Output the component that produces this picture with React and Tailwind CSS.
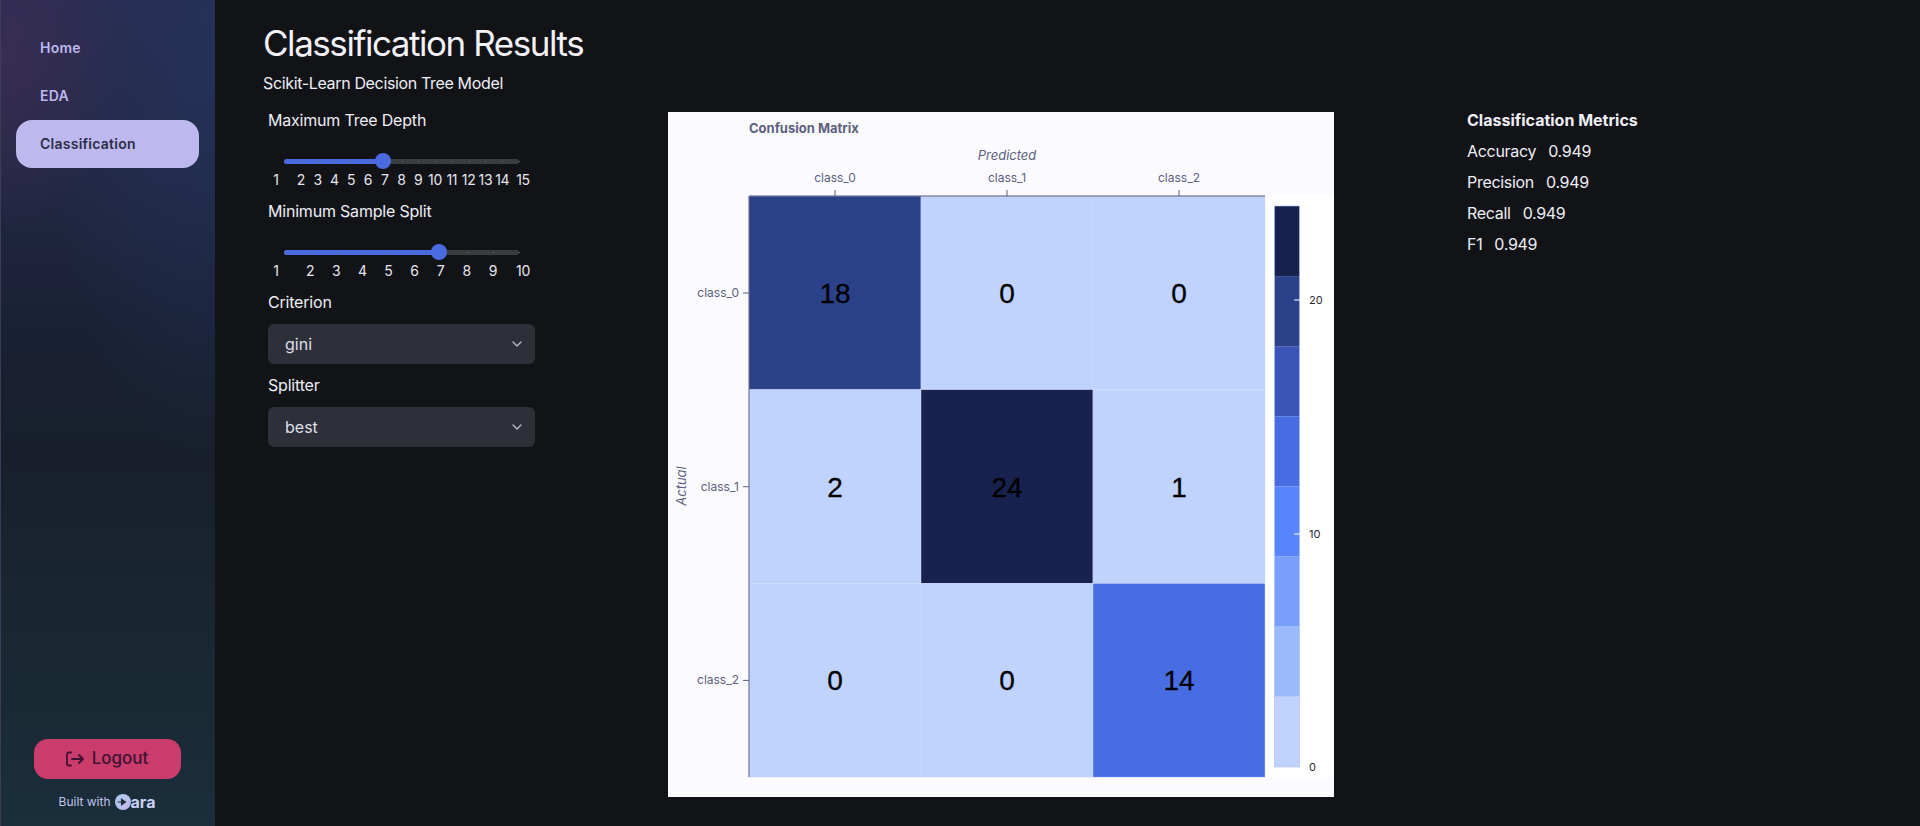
import React from "react";
import { ChevronDown } from "lucide-react";

const FONT = { fontFamily: "Inter, sans-serif" };

const NavItem = ({ label, active }) => (
  <div
    className={
      active
        ? "h-12 rounded-2xl bg-[#bdb9ee] pl-[24px] flex items-center text-sm font-semibold text-[#2b2c48] tracking-[0.25px]"
        : "h-12 pl-[24px] flex items-center text-sm font-semibold text-[#bdb9ee] tracking-[0.25px]"
    }
  >
    {label}
  </div>
);

const LogoutIcon = () => (
  <svg width="18" height="16" viewBox="0 0 18 16" fill="none" stroke="#3d1233" strokeWidth="1.8" strokeLinecap="round" strokeLinejoin="round">
    <path d="M5 1.5H3a2 2 0 0 0-2 2v9a2 2 0 0 0 2 2h2" />
    <path d="M6 8h11M13 4l4 4-4 4" />
  </svg>
);

const Sidebar = () => (
  <aside className="w-[215px] shrink-0 h-[826px] flex flex-col border-l border-[#3a3d55] bg-[radial-gradient(ellipse_120px_170px_at_0%_7%,#432f5899,transparent),radial-gradient(ellipse_170px_400px_at_100%_8%,#20386188,transparent),linear-gradient(180deg,#2b2c50_0%,#242845_20%,#1b2136_38%,#181f2b_55%,#19262f_72%,#1a2e3b_100%)]">
    <nav className="pt-6 pl-[15px] pr-4">
      <NavItem label="Home" />
      <NavItem label="EDA" />
      <NavItem label="Classification" active />
    </nav>
    <div className="mt-auto pb-[15px] pr-[2px] flex flex-col items-center">
      <button className="w-[147px] h-10 rounded-[14px] bg-[#c93c6c] flex items-center justify-center gap-2 text-[#3d1233] text-[17px] font-medium">
        <LogoutIcon />
        Logout
      </button>
      <div className="mt-[14px] h-[18px] flex items-center text-xs text-[#c3c3ee]">
        Built with
        <svg className="ml-1" width="16" height="16" viewBox="0 0 16 16">
          <defs>
            <linearGradient id="logo" x1="0" y1="0" x2="1" y2="1">
              <stop offset="0" stopColor="#a9cdf0" />
              <stop offset="1" stopColor="#c9b6ea" />
            </linearGradient>
          </defs>
          <circle cx="8" cy="8" r="8" fill="url(#logo)" />
          <path d="M6.5 4.5l5 3.5-5 3.5z" fill="#1a2c39" />
          <path d="M2.5 8h5M6.5 4.5v7" stroke="#1a2c39" strokeWidth="1.1" />
        </svg>
        <span className="text-base font-bold leading-none text-[#c9d0f2]">ara</span>
      </div>
    </div>
  </aside>
);

const Slider = ({ label, max, value }) => {
  const marks = Array.from({ length: max }, (_, i) => i + 1);
  const pct = (v) => ((v - 1) / (max - 1)) * 100;
  return (
    <div className="h-[91px] text-[#eeeef6]">
      <div className="h-6 leading-6 text-base tracking-[-0.2px]">{label}</div>
      <div className="relative mt-[27px] ml-4 w-[235px] h-[5px] rounded-full bg-[#3a3c42]">
        <div className="h-full rounded-full bg-[#4a6be0]" style={{ width: pct(value) + "%" }} />
        {marks.map((m) => (
          <span key={m} className="absolute top-[2px] w-[1px] h-[1px] bg-[#6a6d74]" style={{ left: pct(m) + "%" }} />
        ))}
        <span
          className="absolute top-[-6px] w-4 h-4 -ml-[10px] rounded-full bg-[#4a6be0]"
          style={{ left: pct(value) + "%" }}
        />
        {marks.map((m) => {
          const edge = m === 1 ? -8 : m === max ? 4 : 0;
          return (
            <span
              key={m}
              className="absolute top-[11px] -translate-x-1/2 text-sm leading-5 text-[#e6e6f0] tracking-[-0.3px]"
              style={{ left: `calc(${pct(m)}% + ${edge}px)` }}
            >
              {m}
            </span>
          );
        })}
      </div>
    </div>
  );
};

const Select = ({ label, value }) => (
  <div className="h-[83px] text-[#eeeef6]">
    <div className="h-6 leading-6 text-base tracking-[-0.2px]">{label}</div>
    <div className="mt-[10px] w-[267px] h-10 rounded-md bg-[#2d3038] pl-[17px] pr-[10px] flex items-center justify-between text-base text-[#dfdfea]">
      {value}
      <ChevronDown size={16} className="text-[#b9bac4]" />
    </div>
  </div>
);

const Matrix = () => {
  const cells = [
    [18, 0, 0],
    [2, 24, 1],
    [0, 0, 14],
  ];
  const fills = {
    18: "#2b428b",
    24: "#18224f",
    14: "#486de3",
  };
  const bar = ["#18224f", "#2b428b", "#3a55b5", "#486de3", "#5885fb", "#789ffb", "#9bbafc", "#bfd3fe"];
  const classes = ["class_0", "class_1", "class_2"];
  const cw = 172;
  const ch = 193.7;
  return (
    <svg width="666" height="685" viewBox="0 0 666 685" className="block" style={FONT}>
      <rect width="666" height="685" fill="#fbfbff" />
      <rect x="597" y="84" width="69" height="581" fill="#ffffff" />
      {cells.map((row, r) =>
        row.map((v, c) => (
          <g key={r + "-" + c}>
            <rect x={81 + c * cw} y={84 + r * ch} width={cw} height={ch} fill={fills[v] || "#bfd3fe"} stroke="#d0dcff" strokeWidth="0.4" />
            <text x={81 + c * cw + cw / 2} y={84 + r * ch + ch / 2 + 10} textAnchor="middle" fontSize="28" fill="#000" stroke="#000" strokeWidth="0.3" style={{ fontFamily: '"Liberation Sans", sans-serif' }}>
              {v}
            </text>
          </g>
        ))
      )}
      <path d="M81 665V84H597" fill="none" stroke="#5c5f7e" strokeWidth="1" />
      <text x="81" y="21" fontSize="13" fontWeight="700" fill="#5c5f7e">Confusion Matrix</text>
      <text x="339" y="48" textAnchor="middle" fontSize="13" fontStyle="italic" fill="#5c5f7e">Predicted</text>
      <text transform="translate(18 374) rotate(-90)" textAnchor="middle" fontSize="13" fontStyle="italic" fill="#5c5f7e">Actual</text>
      {classes.map((name, i) => (
        <g key={name} fill="#5c5f7e" fontSize="12">
          <text x={167 + i * cw} y={70} textAnchor="middle">{name}</text>
          <path d={`M${167 + i * cw} 78V84`} stroke="#5c5f7e" />
          <text x="71" y={181 + i * ch + 4} textAnchor="end">{name}</text>
          <path d={`M75 ${181 + i * ch}H81`} stroke="#5c5f7e" />
        </g>
      ))}
      {bar.map((c, i) => (
        <rect key={c} x="606.5" y={94 + i * 70.1} width="25" height="70.2" fill={c} />
      ))}
      <rect x="606.5" y="94" width="25" height="561" fill="none" stroke="#a9bdf5" strokeWidth="0.6" />
      <path d="M626 188H632M626 422H632" stroke="#ffffff" />
      <g fontSize="11" fill="#2a2a33">
        <text x="641" y="192">20</text>
        <text x="641" y="426">10</text>
        <text x="641" y="659">0</text>
      </g>
    </svg>
  );
};

const Metric = ({ name, value }) => (
  <div className="h-[31px] flex items-center gap-3 text-base text-[#eeeef6] tracking-[-0.3px]">
    <span>{name}</span>
    <span>{value}</span>
  </div>
);

export default function App() {
  return (
    <div className="flex w-[1920px] h-[826px] overflow-hidden bg-[#121316]" style={FONT}>
      <Sidebar />
      <main className="flex-1 pl-12 pt-[23px]">
        <h1 className="text-[35px] leading-10 text-[#f2f2f8] font-normal tracking-[-1.45px]">Classification Results</h1>
        <p className="mt-2 h-6 leading-6 text-base text-[#eeeef6] tracking-[-0.35px]">Scikit-Learn Decision Tree Model</p>
        <div className="flex mt-[13px]">
          <div className="w-[405px] pl-[5px]">
            <Slider label="Maximum Tree Depth" max={15} value={7} />
            <Slider label="Minimum Sample Split" max={10} value={7} />
            <Select label="Criterion" value="gini" />
            <Select label="Splitter" value="best" />
          </div>
          <div className="mt-1 w-[666px]">
            <Matrix />
          </div>
          <div className="ml-[133px]">
            <div className="h-6 leading-6 text-base font-bold text-[#eeeef6] mb-[3px]">Classification Metrics</div>
            <Metric name="Accuracy" value="0.949" />
            <Metric name="Precision" value="0.949" />
            <Metric name="Recall" value="0.949" />
            <Metric name="F1" value="0.949" />
          </div>
        </div>
      </main>
    </div>
  );
}
